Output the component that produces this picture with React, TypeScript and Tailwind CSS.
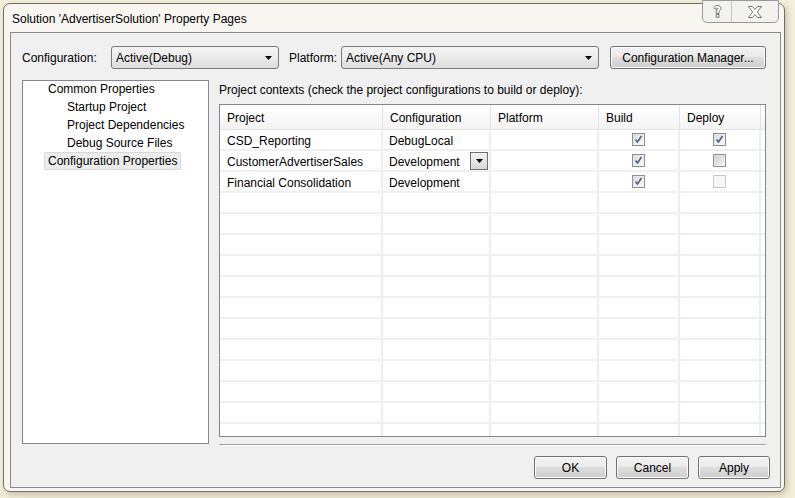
import React from 'react';

const font = { fontFamily: '"Liberation Sans", Arial, sans-serif' };

const rows = [
  { project: 'CSD_Reporting', config: 'DebugLocal', build: 'on', deploy: 'on', drop: false },
  { project: 'CustomerAdvertiserSales', config: 'Development', build: 'on', deploy: 'off', drop: true },
  { project: 'Financial Consolidation', config: 'Development', build: 'on', deploy: 'disabled', drop: false },
];

const cols = ['w-[163px]', 'w-[108px]', 'w-[108px]', 'w-[81px]', 'w-[81px]'];

function Arrow() {
  return (
    <svg width="7" height="4" viewBox="0 0 7 4">
      <path d="M0 0h7L3.5 4z" fill="#000" />
    </svg>
  );
}

function Combo({ value, width }: { value: string; width: string }) {
  return (
    <div
      className={`${width} h-[23px] flex items-center justify-between pl-[4px] pr-[6px] rounded-[3px] border border-[#7a7a7a] bg-gradient-to-b from-[#f4f4f4] via-[#ebebeb] to-[#dddddd]`}
    >
      <span>{value}</span>
      <Arrow />
    </div>
  );
}

function Button({ label, width }: { label: string; width: string }) {
  return (
    <button
      className={`${width} h-[23px] rounded-[3px] border border-[#707070] bg-[linear-gradient(#f2f2f2_0%,#ebebeb_45%,#dddddd_50%,#cfcfcf_100%)] text-black text-[12px] shadow-[inset_0_0_0_1px_#fcfcfc]`}
    >
      {label}
    </button>
  );
}

function Check({ state }: { state: string }) {
  const disabled = state === 'disabled';
  return (
    <div
      className={`w-[13px] h-[13px] border flex items-center justify-center ${
        disabled ? 'border-[#c8c8c8] bg-[#f6f6f6]' : 'border-[#8f8f8f] bg-gradient-to-br from-[#dcdcdc] to-[#fbfbfb]'
      }`}
    >
      {state === 'on' && (
        <svg width="9" height="9" viewBox="0 0 9 9">
          <path d="M1.5 4.5l2 2.5 4-6" fill="none" stroke="#4d6185" strokeWidth="1.6" />
        </svg>
      )}
      {state === 'off' && <div className="w-[9px] h-[9px] bg-gradient-to-br from-[#cfcfcf] to-[#f3f3f3]" />}
    </div>
  );
}

export default function App() {
  const blanks = Array.from({ length: 13 });
  return (
    <div className="w-[795px] h-[498px] bg-[#f4efd9] pt-[3px] pl-[3px] overflow-hidden text-[12px] text-black" style={font}>
      <div className="relative w-[782px] h-[489px] rounded-[7px] border border-[#6e6e6e] bg-[#f7f6f1] flex flex-col shadow-[2px_3px_6px_rgba(120,110,80,0.35)]">
        {/* title bar */}
        <div className="h-[28px] flex items-center pl-[8px] pt-[1px] shrink-0">
          Solution 'AdvertiserSolution' Property Pages
        </div>
        <div className="absolute top-[-4px] right-[5px] flex h-[23px] rounded-b-[5px] border border-[#9a9a9a] bg-[#f2f2ee]">
          <div className="w-[29px] flex items-center justify-center border-r border-[#c4c4c4]">
            <svg width="9" height="13" viewBox="0 0 9 13">
              <path d="M1 3.5C1 1.5 2.6.5 4.5.5S8 1.6 8 3.4c0 1.6-1.2 2.3-2 2.9v2.2H3.2V5.6l1.5-1c.5-.4.5-1.4-.2-1.5-.6-.1-.9.4-.9 1.1z M3.2 9.5h2.8v2.8H3.2z" fill="#fff" stroke="#6a6a6a" strokeWidth="0.9" />
            </svg>
          </div>
          <div className="w-[46px] flex items-center justify-center">
            <svg width="14" height="12" viewBox="0 0 14 12">
              <path d="M.5.5h4L7 3.5 9.5.5h4L9.3 6l4.2 5.5h-4L7 8.5l-2.5 3h-4L4.7 6z" fill="#fff" stroke="#6a6a6a" strokeWidth="0.9" />
            </svg>
          </div>
        </div>

        {/* client area */}
        <div className="ml-[6px] mr-[3px] mb-[3px] flex-1 border border-[#8a8a8a] bg-[#f0f0f0] flex flex-col pl-[11px] pt-[13px]">
          <div className="flex items-center h-[23px]">
            <span className="w-[89px]">Configuration:</span>
            <Combo value="Active(Debug)" width="w-[168px]" />
            <span className="ml-[10px] w-[52px]">Platform:</span>
            <Combo value="Active(Any CPU)" width="w-[258px]" />
            <div className="ml-[11px]">
              <Button label="Configuration Manager..." width="w-[156px]" />
            </div>
          </div>

          <div className="flex mt-[11px]">
            {/* tree */}
            <div className="w-[187px] h-[364px] border border-[#828790] bg-white">
              <div className="-mt-[1px] h-[18px] leading-[18px] pl-[25px]">Common Properties</div>
              <div className="h-[18px] leading-[18px] pl-[44px]">Startup Project</div>
              <div className="h-[18px] leading-[18px] pl-[44px]">Project Dependencies</div>
              <div className="h-[18px] leading-[18px] pl-[44px]">Debug Source Files</div>
              <div className="pl-[21px]">
                <div className="inline-block h-[18px] leading-[16px] px-[3px] rounded-[2px] border border-[#d9d9d9] bg-[#ececec]">
                  Configuration Properties
                </div>
              </div>
            </div>

            {/* grid */}
            <div className="ml-[10px] flex flex-col">
              <div className="h-[24px] leading-[20px]">Project contexts (check the project configurations to build or deploy):</div>
              <div className="w-[547px] h-[333px] border border-[#828790] bg-white overflow-hidden">
                <div className="flex h-[25px] border-b border-[#e3e3e3] bg-gradient-to-b from-white to-[#f3f3f3]">
                  {['Project', 'Configuration', 'Platform', 'Build', 'Deploy'].map((h, i) => (
                    <div key={h} className={`${cols[i]} flex items-center pl-[7px] pt-[1px] border-r border-[#e2e2e2]`}>
                      {h}
                    </div>
                  ))}
                </div>
                {rows.map((r) => (
                  <div key={r.project} className="flex h-[21px] border-b-2 border-[#f0f0f0]">
                    <div className={`${cols[0]} flex items-center pl-[7px] pt-[2px] border-r-2 border-[#eaeff7]`}>{r.project}</div>
                    <div className={`${cols[1]} flex items-center justify-between pl-[6px] pr-[1px] border-r-2 border-[#eaeff7]`}>
                      <span className="pt-[2px]">{r.config}</span>
                      {r.drop && (
                        <div className="w-[18px] h-[18px] border border-[#707070] bg-gradient-to-b from-[#f2f2f2] to-[#d8d8d8] flex items-center justify-center">
                          <Arrow />
                        </div>
                      )}
                    </div>
                    <div className={`${cols[2]} border-r-2 border-[#eaeff7]`} />
                    <div className={`${cols[3]} flex items-center justify-center border-r-2 border-[#eaeff7]`}>
                      <Check state={r.build} />
                    </div>
                    <div className={`${cols[4]} flex items-center justify-center border-r-2 border-[#eaeff7]`}>
                      <Check state={r.deploy} />
                    </div>
                  </div>
                ))}
                {blanks.map((_, k) => (
                  <div key={k} className="flex h-[21px] border-b-2 border-[#f0f0f0]">
                    {cols.map((c, i) => (
                      <div key={i} className={`${c} border-r-2 border-[#eaeff7]`} />
                    ))}
                  </div>
                ))}
              </div>
              <div className="mt-[7px] h-[2px] border-t border-[#a0a0a0] border-b border-b-white" />
            </div>
          </div>

          <div className="flex justify-end gap-[9px] mt-[10px] pr-[10px]">
            <Button label="OK" width="w-[73px]" />
            <Button label="Cancel" width="w-[73px]" />
            <Button label="Apply" width="w-[72px]" />
          </div>
        </div>
      </div>
    </div>
  );
}
